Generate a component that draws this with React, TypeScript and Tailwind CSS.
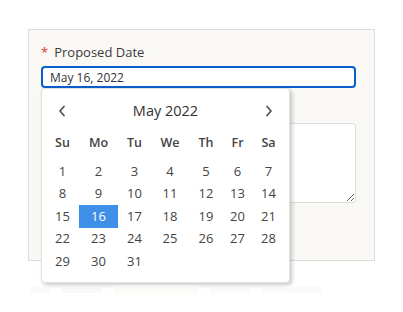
import { useState } from 'react';

const weekDays = ['Su', 'Mo', 'Tu', 'We', 'Th', 'Fr', 'Sa'];

// May 2022 starts on a Sunday
const days: (number | null)[] = Array.from({ length: 35 }, (_, i) => (i < 31 ? i + 1 : null));

function Chevron({ dir }: { dir: 'left' | 'right' }) {
    return (
        <svg width="8" height="12" viewBox="0 0 8 12" fill="none" className="text-[#555]">
            <path d={dir === 'left' ? 'M6 1.5 L2 6 L6 10.5' : 'M2 1.5 L6 6 L2 10.5'} stroke="currentColor" strokeWidth="1.8" strokeLinecap="round" strokeLinejoin="round" />
        </svg>
    );
}

export default function App() {
    const [selected] = useState(16);

    return (
        <div className="relative h-[312px] w-[403px] overflow-hidden bg-white font-['Open_Sans',sans-serif] text-[#333]">
            <div className="ml-[28px] mt-[29px] h-[232px] w-[347px] border border-[#dcdcdc] bg-[#f9f8f4] pl-[12px] pt-[13px]">
                <label className="flex h-[20px] items-center text-[13px] text-[#3a3a3a]">
                    <span className="mr-[6px] text-[#e0302a]">*</span>
                    Proposed Date
                </label>
                <input
                    readOnly
                    value="May 16, 2022"
                    className="mt-[3px] block h-[22px] w-[315px] rounded-[4px] border-2 border-[#0b5fcc] bg-white px-[7px] text-[12px] text-[#333] outline-none"
                />
                <textarea readOnly className="mt-[35px] block h-[80px] w-[315px] rounded-[3px] border border-[#dedede] bg-white" />
            </div>

            <div className="absolute left-[41px] top-[88px] w-[249px] rounded-[4px] border border-[#e2e2e2] bg-white pb-[9px] pl-[4px] shadow-[2px_2px_4px_rgba(0,0,0,0.22)]">
                <div className="flex h-[43px] items-center justify-between pl-[12px] pr-[16px]">
                    <Chevron dir="left" />
                    <span className="text-[14.5px] font-medium text-[#333]">May 2022</span>
                    <Chevron dir="right" />
                </div>
                <div className="grid h-[22px] grid-cols-[33px_39px_33px_38px_34px_29px_33px] items-center text-center text-[12.5px] font-semibold text-[#444]">
                    {weekDays.map((d) => (
                        <span key={d}>{d}</span>
                    ))}
                </div>
                <div className="mt-[6px] grid grid-cols-[33px_39px_33px_38px_34px_29px_33px] text-center text-[13px] text-[#444]">
                    {days.map((d, i) => (
                        <span key={i} className={`flex h-[22.5px] items-center justify-center ${d === selected ? 'bg-[#3f8ee8] text-white' : ''}`}>
                            {d ?? ''}
                        </span>
                    ))}
                </div>
            </div>

            <div className="mt-[24px] flex items-center gap-[12px] pl-[30px] opacity-50">
                <div className="h-[6px] w-[20px] rounded bg-[#f7f7f7]" />
                <div className="h-[6px] w-[40px] rounded bg-[#f4f4f4]" />
                <div className="h-[10px] w-[84px] bg-[#fbfaf3]" />
                <div className="h-[6px] w-[40px] rounded bg-[#f6f6f6]" />
                <div className="h-[6px] w-[60px] rounded bg-[#f7f7f7]" />
            </div>
        </div>
    );
}
